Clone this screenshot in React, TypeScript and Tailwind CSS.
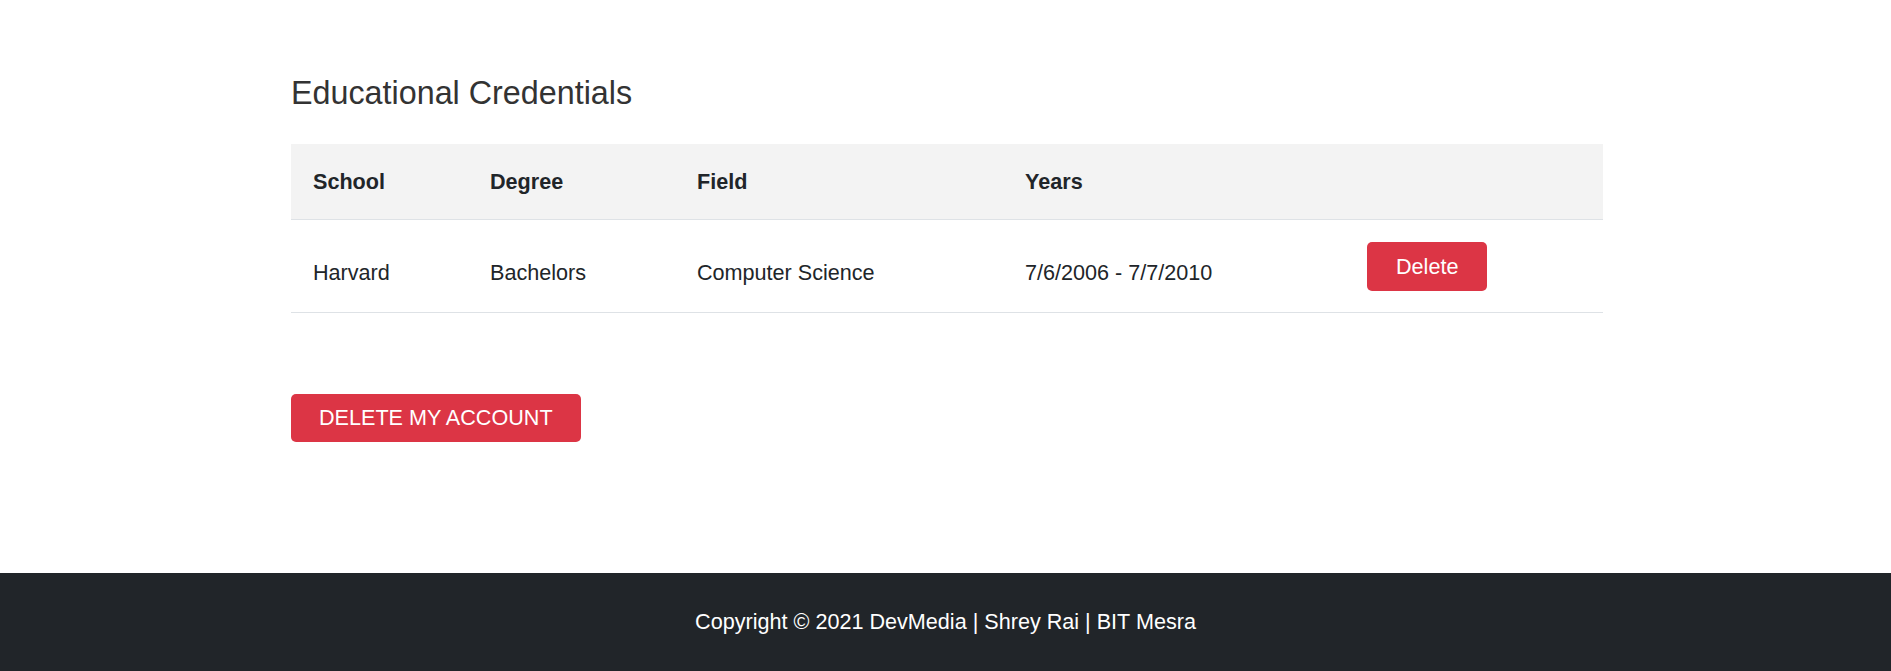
import React from 'react';

interface Credential {
  id: number;
  school: string;
  degree: string;
  field: string;
  from: string;
  to: string;
}

const CREDENTIALS: Credential[] = [
  { id: 1, school: 'Harvard', degree: 'Bachelors', field: 'Computer Science', from: '7/6/2006', to: '7/7/2010' },
];

const App: React.FC = () => {
  return (
    <div className="min-h-screen flex flex-col bg-white text-[#212529] font-['Liberation_Sans',Arial,sans-serif] text-[21.6px] leading-[32px]">
      {/* Dashboard body */}
      <main className="flex-1">
        <div className="w-[1315px] mx-auto pl-[3px] pt-[74px]">
          <h3 className="text-[32.3px] leading-[38px] font-normal text-[#333] mb-[32px]">Educational Credentials</h3>

          <table className="w-full table-fixed border-collapse text-left">
            <colgroup>
              <col className="w-[177px]" />
              <col className="w-[207px]" />
              <col className="w-[328px]" />
              <col className="w-[343px]" />
              <col />
            </colgroup>
            <thead>
              <tr className="bg-[#f3f3f3] border-b border-[#dee2e6]">
                <th className="font-bold px-[22px] pt-[22px] pb-[21px]">School</th>
                <th className="font-bold px-[22px] pt-[22px] pb-[21px]">Degree</th>
                <th className="font-bold px-[22px] pt-[22px] pb-[21px]">Field</th>
                <th className="font-bold px-[22px] pt-[22px] pb-[21px]">Years</th>
                <th className="px-[22px] pt-[22px] pb-[21px]"></th>
              </tr>
            </thead>
            <tbody>
              {CREDENTIALS.map((c) => (
                <tr key={c.id} className="border-b border-[#dee2e6]">
                  <td className="align-top px-[22px] pt-[37px]">{c.school}</td>
                  <td className="align-top px-[22px] pt-[37px]">{c.degree}</td>
                  <td className="align-top px-[22px] pt-[37px]">{c.field}</td>
                  <td className="align-top px-[22px] pt-[37px]">
                    {c.from} - {c.to}
                  </td>
                  <td className="align-top px-[21px] pt-[22px] pb-[21px]">
                    <button className="h-[49px] px-[29px] rounded-[5px] bg-[#dc3545] text-white">Delete</button>
                  </td>
                </tr>
              ))}
            </tbody>
          </table>

          <button className="mt-[81px] h-[48px] px-[28px] rounded-[5px] bg-[#dc3545] text-white uppercase">
            Delete My Account
          </button>
        </div>
      </main>

      {/* Footer */}
      <footer className="bg-[#212529] text-white text-center py-[33px]">
        Copyright © 2021 DevMedia | Shrey Rai | BIT Mesra
      </footer>
    </div>
  );
};

export default App;
